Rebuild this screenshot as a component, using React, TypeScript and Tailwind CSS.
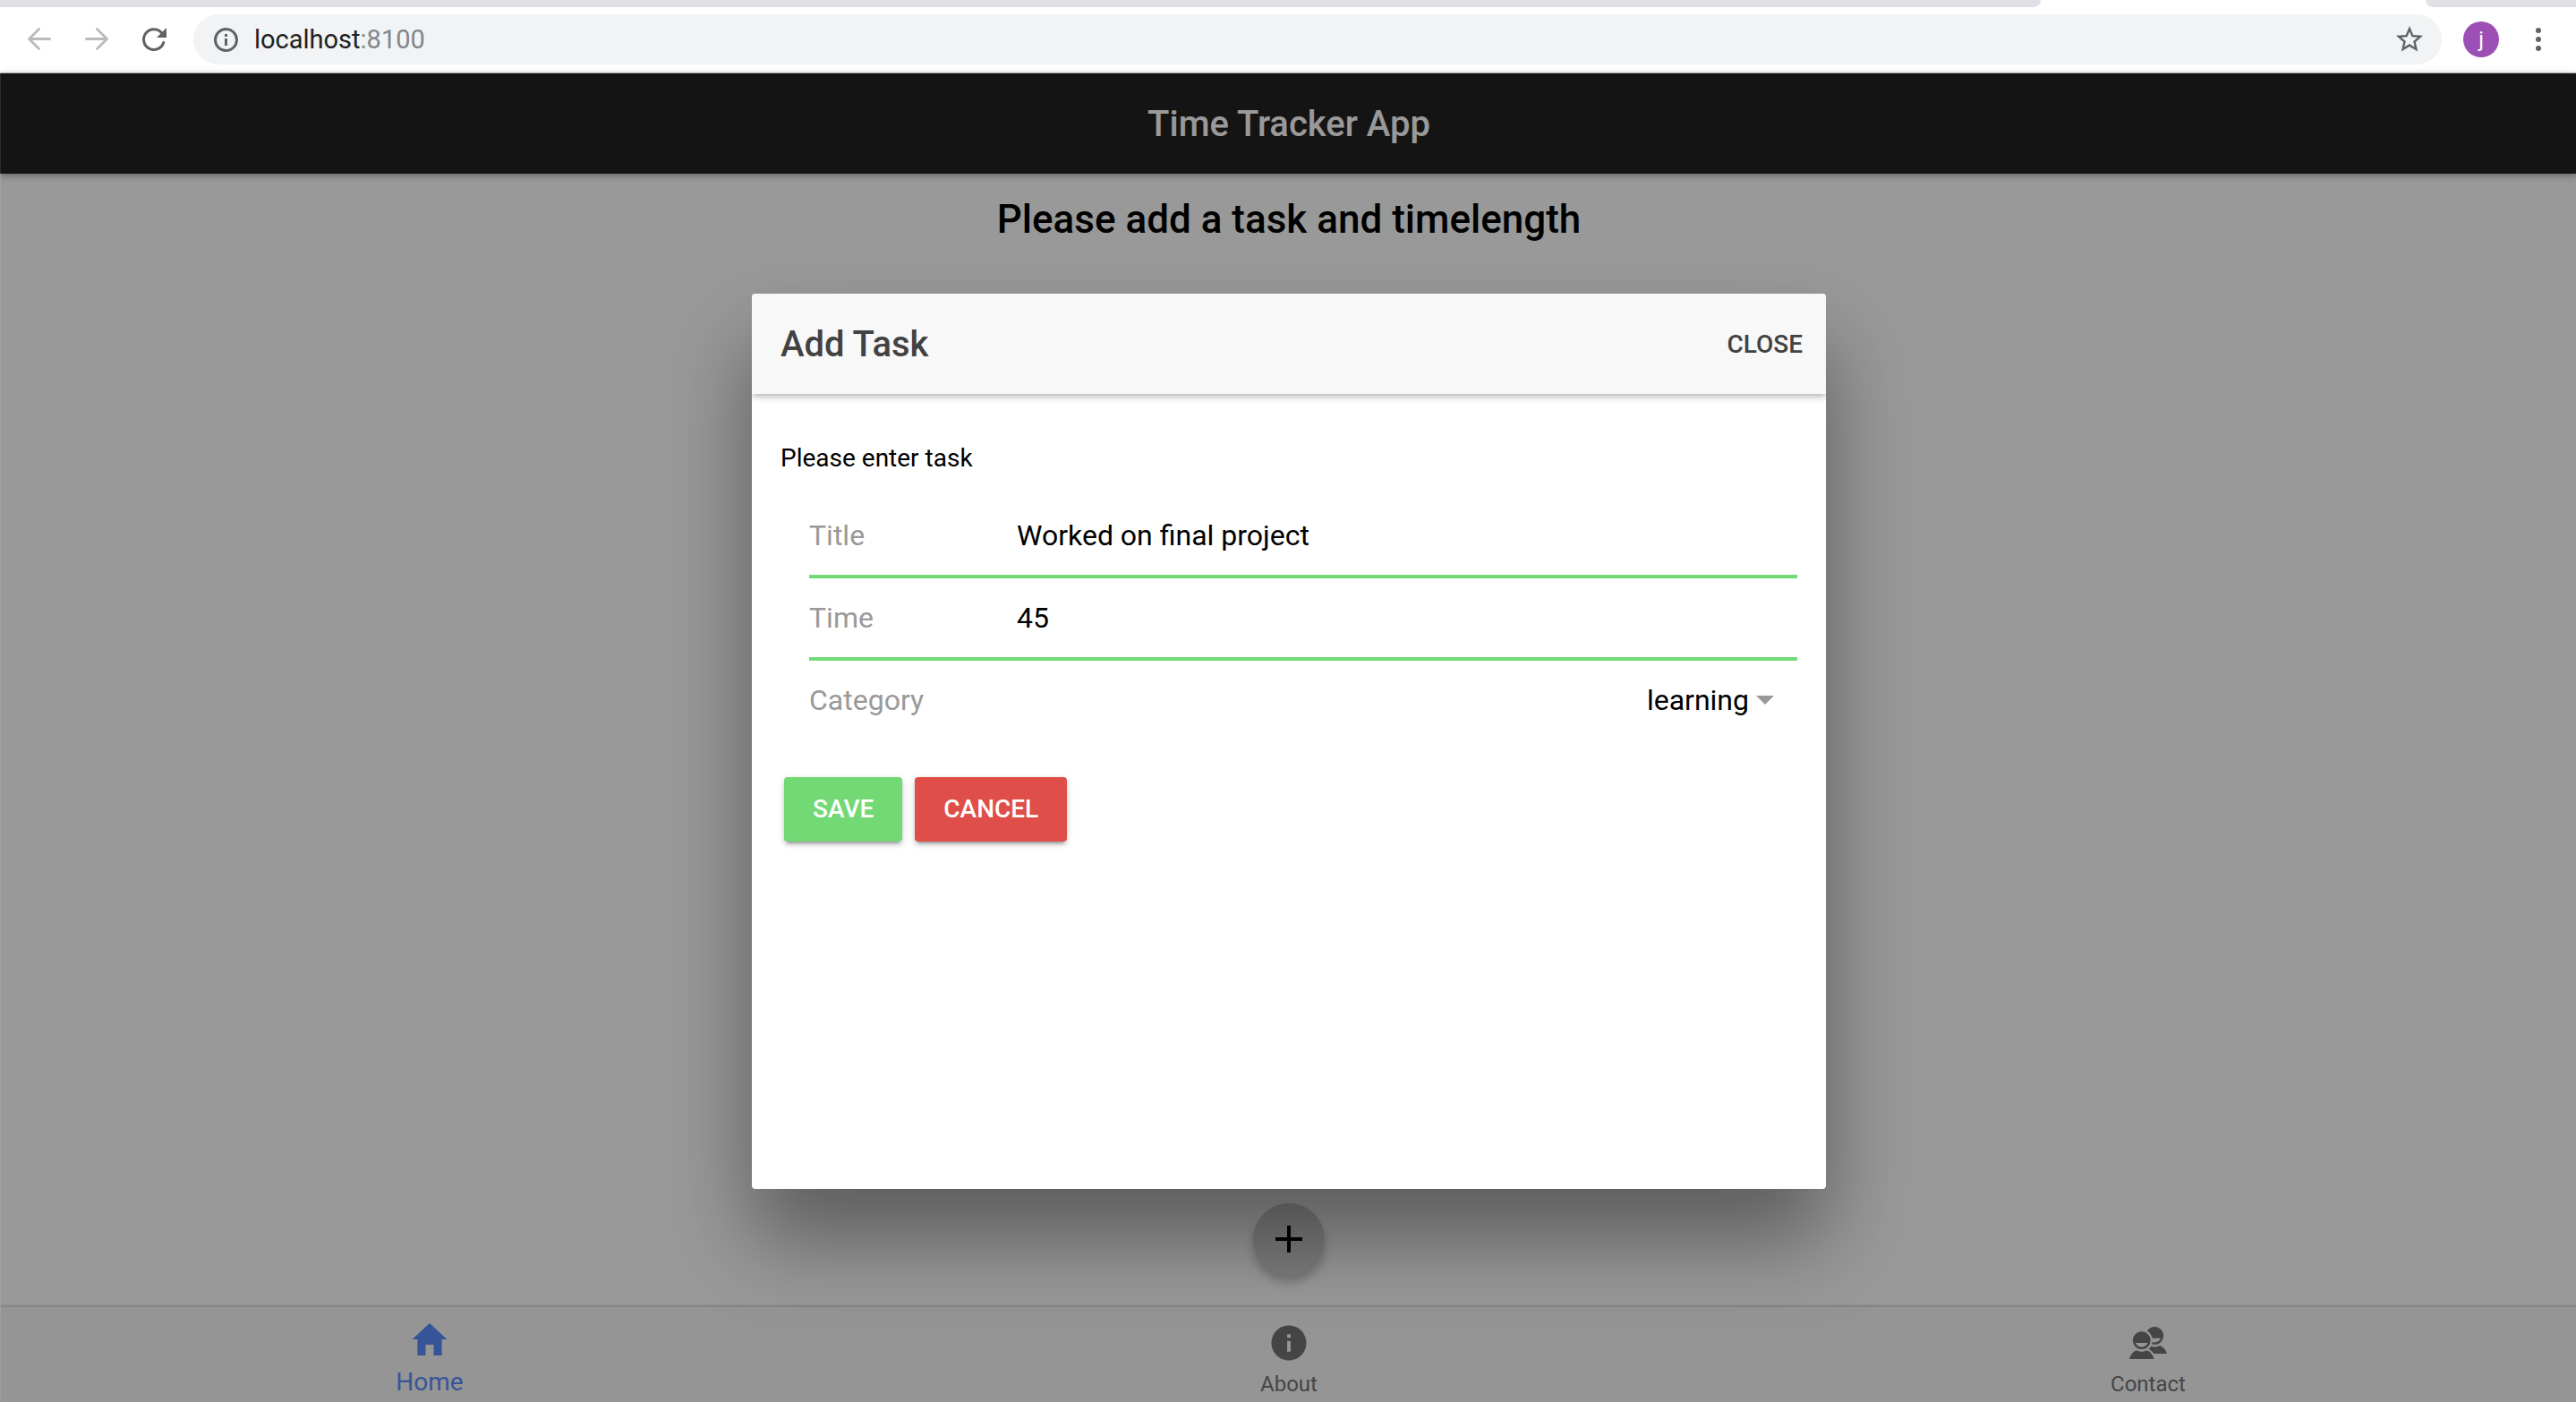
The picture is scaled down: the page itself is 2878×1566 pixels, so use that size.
import { useState, type ReactNode } from "react";
import { IoMdAdd, IoMdContacts, IoMdHome, IoMdInformationCircle } from "react-icons/io";

function BrowserBar() {
  return (
    <div className="shrink-0 bg-white">
      <div className="flex h-2 justify-between overflow-hidden">
        <div className="w-[2280px] rounded-br-xl bg-[#dfe1e6]" />
        <div className="w-[168px] rounded-bl-xl bg-[#dfe1e6]" />
      </div>
      <div className="flex h-[74px] items-center border-b border-[#b6b8ba] pb-px">
        <nav className="flex gap-8 pl-7 text-[#bababa]" aria-label="Browser">
          <button type="button" aria-label="Back" className="size-8">
            <svg viewBox="0 0 32 32" className="size-8" fill="none" stroke="currentColor" strokeWidth="2.800" strokeLinecap="round" strokeLinejoin="round">
              <path d="M27.500 15.500H4.500M15.500 4.500l-11 11 11 11" />
            </svg>
          </button>
          <button type="button" aria-label="Forward" className="size-8">
            <svg viewBox="0 0 32 32" className="size-8" fill="none" stroke="currentColor" strokeWidth="2.800" strokeLinecap="round" strokeLinejoin="round">
              <path d="M4.500 15.500h23M16.500 4.500l11 11-11 11" />
            </svg>
          </button>
          <button type="button" aria-label="Reload" className="size-8 text-[#5f6368]">
            <svg viewBox="0 0 32 32" className="size-8" fill="none">
              <path d="M26.800 19.500A11.400 11.400 0 1 1 24.500 8.500" stroke="currentColor" strokeWidth="3" strokeLinecap="round" />
              <path d="M30 3v11H19z" fill="currentColor" />
            </svg>
          </button>
        </nav>
        <div className="ml-7 flex h-14 flex-1 items-center rounded-full bg-[#f1f3f4] pr-[18px] pl-5">
          <svg viewBox="0 0 32 32" className="size-8" fill="none" stroke="#5f6368" strokeWidth="3" aria-hidden="true">
            <circle cx="16.500" cy="16.500" r="12" />
            <path d="M16.500 15v8M16.500 10v3" />
          </svg>
          <div className="ml-4 flex-1 pt-0.5 text-[29px] text-[#202124]">
            localhost<span className="text-[#80868b]">:8100</span>
          </div>
          <button type="button" aria-label="Bookmark" className="size-9 text-[#5f6368]">
            <svg viewBox="0 0 24 24" className="size-9" fill="currentColor">
              <path d="M22 9.240l-7.190-.620L12 2 9.190 8.630 2 9.240l5.460 4.730L5.820 21 12 17.270 18.180 21l-1.630-7.030L22 9.240zM12 15.400l-3.760 2.270 1-4.280-3.320-2.880 4.380-.380L12 6.100l1.710 4.040 4.380.380-3.320 2.880 1 4.280L12 15.400z" />
            </svg>
          </button>
        </div>
        <button type="button" aria-label="Profile" className="ml-6 flex size-10 items-center justify-center rounded-full bg-[#9c50b5] text-2xl text-white">
          j
        </button>
        <button type="button" aria-label="Menu" className="mr-[26px] ml-7 size-8 text-[#5f6368]">
          <svg viewBox="0 0 32 32" className="size-8" fill="currentColor">
            <circle cx="16" cy="6" r="3" />
            <circle cx="16" cy="16" r="3" />
            <circle cx="16" cy="26" r="3" />
          </svg>
        </button>
      </div>
    </div>
  );
}

function Tab({ label, icon, active = false }: { label: string; icon: ReactNode; active?: boolean }) {
  return (
    <a
      href="#"
      aria-current={active ? "page" : undefined}
      className={
        active
          ? "flex flex-1 flex-col items-center gap-1.5 pt-3 text-[28px] leading-9 text-[#5a8efd]"
          : "flex flex-1 flex-col items-center gap-1.5 pt-4 text-2xl leading-8 text-[#747474]"
      }
    >
      {icon}
      <span>{label}</span>
    </a>
  );
}

function TextRow({ id, label, value }: { id: string; label: string; value: string }) {
  const [text, setText] = useState(value);
  return (
    <div className="flex h-[92px] items-center border-b-4 border-[#72d975]">
      <label htmlFor={id} className="w-58 text-[#999]">
        {label}
      </label>
      <input
        id={id}
        type="text"
        value={text}
        onChange={(e) => setText(e.target.value)}
        className="min-w-0 flex-1 text-black outline-none"
      />
    </div>
  );
}

function AddTaskModal() {
  return (
    <section
      role="dialog"
      aria-labelledby="modal-title"
      className="flex h-[1000px] w-[1200px] max-w-full flex-col overflow-hidden rounded-sm bg-white shadow-[0_56px_96px_rgba(0,0,0,0.4)]"
    >
      <header className="z-10 flex h-28 shrink-0 items-center justify-between bg-[#f8f8f8] pt-0.5 pr-[26px] pl-8 text-[#424242] shadow-[0_2px_8px_rgba(0,0,0,0.35)]">
        <h2 id="modal-title" className="text-[40px] font-medium">
          Add Task
        </h2>
        <button type="button" className="text-[28px] font-medium uppercase">
          Close
        </button>
      </header>
      <form className="pt-[50px] pl-8" onSubmit={(e) => e.preventDefault()}>
        <p className="text-[28px] leading-11 text-black">Please enter task</p>
        <div className="mt-5 px-8 text-[32px]">
          <TextRow id="title" label="Title" value="Worked on final project" />
          <TextRow id="time" label="Time" value="45" />
          <div className="flex h-[88px] items-center">
            <label htmlFor="category" className="text-[#999]">
              Category
            </label>
            <div className="relative flex flex-1 items-center">
              <select id="category" defaultValue="learning" className="w-full appearance-none pr-[54px] text-right text-black outline-none">
                <option value="learning">learning</option>
                <option value="work">work</option>
                <option value="fitness">fitness</option>
              </select>
              <svg viewBox="0 0 20 10" className="pointer-events-none absolute right-[26px] h-[10px] w-5" fill="#999" aria-hidden="true">
                <path d="M0 0h20L10 10z" />
              </svg>
            </div>
          </div>
        </div>
        <div className="mt-[42px] flex gap-[14px] px-1 text-[28px] font-medium text-white">
          <button type="submit" className="h-18 rounded-sm bg-[#72d975] px-8 uppercase shadow-[0_6px_2px_-4px_rgba(0,0,0,0.2),0_4px_4px_rgba(0,0,0,0.14),0_2px_10px_rgba(0,0,0,0.12)]">
            Save
          </button>
          <button type="button" className="h-18 rounded-sm bg-[#df4e48] px-8 uppercase shadow-[0_6px_2px_-4px_rgba(0,0,0,0.2),0_4px_4px_rgba(0,0,0,0.14),0_2px_10px_rgba(0,0,0,0.12)]">
            Cancel
          </button>
        </div>
      </form>
    </section>
  );
}

export default function App() {
  return (
    <div className="flex h-screen flex-col overflow-hidden font-[Roboto,sans-serif]">
      <BrowserBar />
      <div className="relative -mr-[2px] flex h-[calc(100vh-74px)] shrink-0 flex-col bg-white">
        <header className="z-10 flex h-28 shrink-0 items-center justify-center bg-[#222] pt-0.5 shadow-[0_2px_8px_rgba(0,0,0,0.35)]">
          <h1 className="text-[40px] font-medium text-white">Time Tracker App</h1>
        </header>
        <main className="flex flex-1 flex-col items-center justify-between pt-6 pb-9">
          <h2 className="text-[44px] leading-[54px] font-medium text-black">Please add a task and timelength</h2>
          <button
            type="button"
            aria-label="Add task"
            className="flex size-20 items-center justify-center rounded-full bg-[#d1d1d1] text-5xl text-black shadow-[0_8px_12px_rgba(0,0,0,0.14),0_8px_10px_rgba(0,0,0,0.1)]"
          >
            <IoMdAdd />
          </button>
        </main>
        <nav className="flex h-[114px] shrink-0 bg-[#f8f8f8] shadow-[0_-1px_3px_rgba(0,0,0,0.25)]" aria-label="Sections">
          <Tab label="Home" active icon={<IoMdHome className="size-12" />} />
          <Tab label="About" icon={<IoMdInformationCircle className="size-12" />} />
          <Tab label="Contact" icon={<IoMdContacts className="size-12" />} />
        </nav>
        <div className="absolute inset-0 z-20 flex items-center justify-center border-x border-white/10 bg-black/40">
          <AddTaskModal />
        </div>
      </div>
    </div>
  );
}
